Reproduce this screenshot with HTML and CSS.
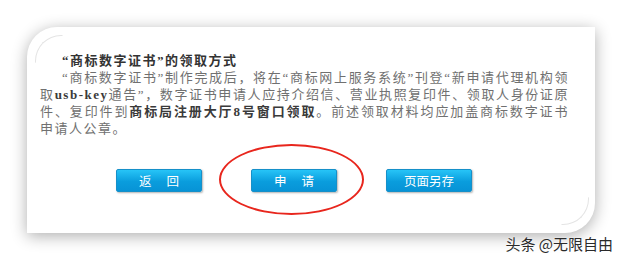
FILE: index.html
```html
<!DOCTYPE html>
<html lang="zh-CN">
<head>
  <meta charset="UTF-8">
  <meta name="viewport" content="width=device-width, initial-scale=1.0">
  <title>商标数字证书的领取方式</title>
  <link rel="stylesheet" href="styles.css">
</head>
<body>
  <div class="card">
    <h2 class="notice-title">“商标数字证书”的领取方式</h2>
    <p class="notice-text">
      <span class="line first">“商标数字证书”制作完成后，将在“商标网上服务系统”刊登“新申请代理机构领</span>
      <span class="line">取<b>usb-key</b>通告”，数字证书申请人应持介绍信、营业执照复印件、领取人身份证原</span>
      <span class="line">件、复印件到<b>商标局注册大厅8号窗口领取</b>。前述领取材料均应加盖商标数字证书</span>
      <span class="line last">申请人公章。</span>
    </p>

    <div class="button-row">
      <button class="btn spaced">返回</button>
      <button class="btn spaced">申请</button>
      <button class="btn">页面另存</button>
    </div>

    <!-- red mark drawn over the apply button -->
    <div class="mark"></div>
  </div>

  <div class="watermark">头条 @无限自由</div>
</body>
</html>
```

FILE: styles.css
```css
body {
  margin: 0;
  width: 622px;
  height: 260px;
  background-color: #fff;
  position: relative;
  overflow: hidden;
}

.card {
  position: relative;
  box-sizing: border-box;
  width: 568px;
  height: 206px;
  margin: 27px 0 0 27px;
  padding: 25px 25px 0 13px;
  background-color: #fff;
  border-radius: 30px 0 30px 0;
  box-shadow: 0 3px 16px rgba(0, 0, 0, 0.32);
}

/* thin inner arcs in the rounded corners */
.card::before,
.card::after {
  content: "";
  position: absolute;
  width: 26px;
  height: 26px;
  border: 1px solid transparent;
}

.card::before {
  top: 8px;
  left: 8px;
  border-top-color: #e4e4e4;
  border-left-color: #e4e4e4;
  border-top-left-radius: 26px;
}

.card::after {
  right: 6px;
  bottom: 8px;
  border-bottom-color: #e4e4e4;
  border-right-color: #e4e4e4;
  border-bottom-right-radius: 26px;
}

.notice-title,
.notice-text {
  margin: 0;
  width: 529px;
  font-family: "Liberation Serif", "Noto Sans CJK SC", serif;
  font-size: 13px;
  line-height: 17px;
  letter-spacing: 1.5px;
}

.notice-title {
  padding-left: 22px;
  box-sizing: border-box;
  font-weight: bold;
  color: #333;
}

.notice-text {
  color: #707070;
}

.line {
  display: block;
  text-align: justify;
  text-align-last: justify;
}

.line.first {
  padding-left: 22px;
}

.line.last {
  text-align-last: left;
}

.notice-text b {
  color: #3a3a3a;
}

.button-row {
  display: flex;
  gap: 49px;
  margin: 32px 0 0 76px;
}

.btn {
  width: 86px;
  height: 23px;
  padding: 0;
  font-family: "Noto Sans CJK SC", sans-serif;
  font-size: 12.5px;
  color: #fff;
  background: linear-gradient(#27c4f7, #0a9ddd 55%, #0793d6);
  border: 1px solid #1690c9;
  border-radius: 2px;
  box-shadow: 1px 1px 2px rgba(0, 0, 0, 0.3);
}

.btn.spaced {
  letter-spacing: 15px;
  text-indent: 15px;
}

.mark {
  position: absolute;
  left: 192px;
  top: 117px;
  width: 141px;
  height: 67px;
  border: 2px solid #e8261d;
  border-radius: 50%;
}

.watermark {
  position: absolute;
  right: 9px;
  top: 233px;
  font-family: "Noto Sans CJK SC", sans-serif;
  font-size: 15px;
  color: #2a2a2a;
  text-shadow: 0 0 2px #fff;
}
```
